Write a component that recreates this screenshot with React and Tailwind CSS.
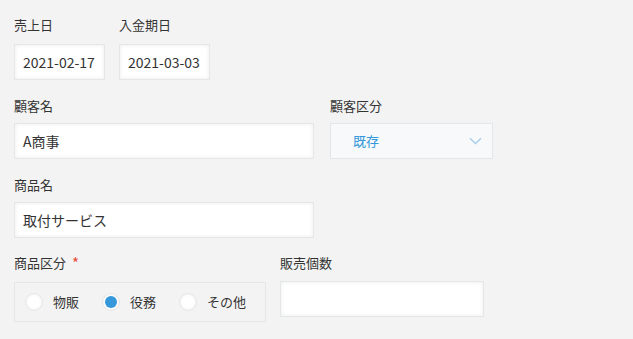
import React from "react";

const font = { fontFamily: '"Noto Sans CJK JP", "Noto Sans", sans-serif' };

function Label({ children, required }) {
  return (
    <div className="h-[20px] leading-[20px] text-[13px] text-[#333] flex items-center">
      <span>{children}</span>
      {required && <span className="ml-[6px] text-[#e74c3c] text-[15px]">*</span>}
    </div>
  );
}

function TextBox({ value, w, h = 36 }) {
  return (
    <div
      className="bg-white border border-[#e3e7e8] shadow-[inset_0_0_4px_#ececec] flex items-center pl-[8px] text-[14px] text-[#333]"
      style={{ width: w, height: h }}
    >
      {value}
    </div>
  );
}

function Radio({ checked, label }) {
  return (
    <div className="flex items-center gap-[10px]">
      <div className="w-[18px] h-[18px] rounded-full bg-white border border-[#e3e7e8] shadow-[inset_0_0_3px_#eaeaea] flex items-center justify-center">
        {checked && <div className="w-[12px] h-[12px] rounded-full bg-[#3498db]" />}
      </div>
      <span className="text-[13px] text-[#333]">{label}</span>
    </div>
  );
}

export default function App() {
  return (
    <div className="w-[633px] h-[339px] bg-[#f3f3f3] pl-[14px] pt-[15px] overflow-hidden" style={font}>
      {/* Row 1 */}
      <div className="flex gap-[14px]">
        <div>
          <Label>売上日</Label>
          <div className="mt-[9px]"><TextBox value="2021-02-17" w={91} /></div>
        </div>
        <div>
          <Label>入金期日</Label>
          <div className="mt-[9px]"><TextBox value="2021-03-03" w={91} /></div>
        </div>
      </div>
      {/* Row 2 */}
      <div className="flex gap-[16px] mt-[16px]">
        <div>
          <Label>顧客名</Label>
          <div className="mt-[7px]"><TextBox value="A商事" w={300} /></div>
        </div>
        <div>
          <Label>顧客区分</Label>
          <div className="mt-[7px] w-[163px] h-[36px] bg-[#f7f9fa] border border-[#e3e7e8] flex items-center justify-between pl-[22px] pr-[10px]">
            <span className="text-[13px] text-[#3498db]">既存</span>
            <svg width="13" height="8" viewBox="0 0 13 8" fill="none">
              <path d="M1 1.2 L6.5 6.5 L12 1.2" stroke="#a9cdea" strokeWidth="1.4" />
            </svg>
          </div>
        </div>
      </div>
      {/* Row 3 */}
      <div className="mt-[16px]">
        <Label>商品名</Label>
        <div className="mt-[7px]"><TextBox value="取付サービス" w={300} /></div>
      </div>
      {/* Row 4 */}
      <div className="flex gap-[14px] mt-[15px]">
        <div>
          <Label required>商品区分</Label>
          <div className="mt-[9px] w-[252px] h-[40px] border border-[#e3e7e8] flex items-center pl-[10px] gap-[23px]">
            <Radio label="物販" />
            <Radio checked label="役務" />
            <Radio label="その他" />
          </div>
        </div>
        <div>
          <Label>販売個数</Label>
          <div className="mt-[8px]"><TextBox value="" w={204} h={36} /></div>
        </div>
      </div>
    </div>
  );
}
